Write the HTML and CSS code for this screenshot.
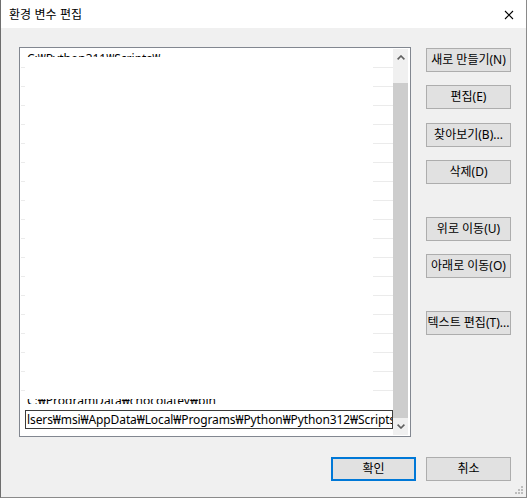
FILE: index.html
```html
<!DOCTYPE html>
<html lang="ko">
<head>
<meta charset="utf-8">
<title>환경 변수 편집</title>
<link rel="stylesheet" href="styles.css">
</head>
<body>
<div class="window">
  <div class="titlebar">
    <span class="title">환경 변수 편집</span>
    <span class="close">
      <svg width="10" height="10" viewBox="0 0 10 10"><path d="M1 1 L9 9 M9 1 L1 9" stroke="#000" stroke-width="1.1" fill="none"/></svg>
    </span>
  </div>
  <div class="main">
    <div class="list">
      <div class="rows">
        <div class="row"><div class="clip clip-first"><span class="cliptext">C:₩Python311₩Scripts₩</span></div></div>
        <div class="row"></div>
        <div class="row"></div>
        <div class="row"></div>
        <div class="row"></div>
        <div class="row"></div>
        <div class="row"></div>
        <div class="row"></div>
        <div class="row"></div>
        <div class="row"></div>
        <div class="row"></div>
        <div class="row"></div>
        <div class="row"></div>
        <div class="row"></div>
        <div class="row"></div>
        <div class="row"></div>
        <div class="row"></div>
        <div class="row"></div>
        <div class="row plain"><div class="clip clip-choco"><span class="cliptext choco">C:₩ProgramData₩chocolatey₩bin</span></div></div>
        <div class="row plain edit-row"><div class="edit">lsers₩msi₩AppData₩Local₩Programs₩Python₩Python312₩Scripts</div></div>
      </div>
      <div class="scrollbar">
        <div class="sb-btn">
          <svg width="8" height="5" viewBox="0 0 8 5"><path d="M0.6 4.4 L4 1 L7.4 4.4" stroke="#606060" stroke-width="1.6" fill="none"/></svg>
        </div>
        <div class="sb-track"><div class="sb-thumb"></div></div>
        <div class="sb-btn">
          <svg width="8" height="5" viewBox="0 0 8 5"><path d="M0.6 0.6 L4 4 L7.4 0.6" stroke="#606060" stroke-width="1.6" fill="none"/></svg>
        </div>
      </div>
    </div>
    <div class="buttons">
      <div class="btn">새로 만들기(N)</div>
      <div class="btn gap-a">편집(E)</div>
      <div class="btn gap-b">찾아보기(B)...</div>
      <div class="btn gap-a">삭제(D)</div>
      <div class="btn gap-l">위로 이동(U)</div>
      <div class="btn gap-a">아래로 이동(O)</div>
      <div class="btn gap-l">텍스트 편집(T)...</div>
    </div>
  </div>
  <div class="footer">
    <div class="btn btn-default">확인</div>
    <div class="btn">취소</div>
  </div>
  <div class="grip">
    <svg width="8" height="8" viewBox="0 0 8 8" fill="#bdbdbd">
      <rect x="6" y="0" width="2" height="2"/>
      <rect x="3" y="3" width="2" height="2"/><rect x="6" y="3" width="2" height="2"/>
      <rect x="0" y="6" width="2" height="2"/><rect x="3" y="6" width="2" height="2"/><rect x="6" y="6" width="2" height="2"/>
    </svg>
  </div>
</div>
</body>
</html>
```
FILE: styles.css
```css
html, body {
  margin: 0;
  padding: 0;
  background: #f0f0f0;
}
body {
  font-family: "Noto Sans", "Noto Sans CJK KR", sans-serif;
  font-size: 12px;
  color: #000;
}
.window {
  position: relative;
  width: 527px;
  height: 498px;
  box-sizing: border-box;
  border-left: 1px solid #6e6e6e;
  border-right: 1px solid #8a8a8a;
  border-bottom: 1px solid #8a8a8a;
  background: #f0f0f0;
  display: flex;
  flex-direction: column;
}
.titlebar {
  height: 28px;
  background: #fff;
  display: flex;
  align-items: center;
  justify-content: space-between;
  padding-left: 8px;
  padding-right: 12px;
}
.title {
  font-family: "Noto Sans CJK KR", sans-serif;
  font-size: 12px;
  line-height: 14px;
}
.close {
  display: flex;
  width: 10px;
  height: 10px;
  margin-top: 1px;
}
.main {
  display: flex;
  padding: 19px 15px 0 18px;
}
.list {
  width: 392px;
  height: 390px;
  box-sizing: border-box;
  border: 1px solid #828790;
  background: #fff;
  padding: 1px 2px 1px 0;
  display: flex;
}
.rows {
  flex: 1;
  min-width: 0;
  display: flex;
  flex-direction: column;
}
.row {
  height: 19px;
  flex: none;
  box-sizing: border-box;
  background-image: linear-gradient(#ebebeb, #ebebeb), linear-gradient(#ebebeb, #ebebeb);
  background-size: 4px 1px, 20px 1px;
  background-position: 1px 100%, 100% 100%;
  background-repeat: no-repeat;
}
.row.plain {
  background-image: none;
}
.clip {
  overflow: hidden;
  margin-left: 7px;
}
.clip-first {
  margin-top: 4px;
  height: 4px;
}
.clip-first .cliptext {
  margin-top: -4px;
}
.clip-choco {
  margin-top: 8px;
  height: 5px;
}
.clip-choco .cliptext {
  margin-top: -8px;
}
.cliptext {
  display: block;
  line-height: 19px;
  white-space: nowrap;
}
.edit-row {
  padding-left: 5px;
}
.edit {
  height: 19px;
  box-sizing: border-box;
  border: 1px solid #3c3c3c;
  padding-left: 1px;
  line-height: 17px;
  letter-spacing: -0.1px;
  white-space: nowrap;
  overflow: hidden;
}
.scrollbar {
  width: 15px;
  flex: none;
  background: #f0f0f0;
  display: flex;
  flex-direction: column;
}
.sb-btn {
  height: 17px;
  display: flex;
  align-items: center;
  justify-content: center;
}
.sb-track {
  flex: 1;
  padding-top: 17px;
  display: flex;
  flex-direction: column;
}
.sb-thumb {
  flex: 1;
  background: #cdcdcd;
}
.buttons {
  width: 85px;
  margin-left: 15px;
  margin-top: 1px;
  display: flex;
  flex-direction: column;
}
.btn {
  height: 24px;
  width: 85px;
  box-sizing: border-box;
  border: 1px solid #adadad;
  background: #e1e1e1;
  display: flex;
  align-items: center;
  justify-content: center;
  white-space: nowrap;
  line-height: 14px;
}
.gap-a { margin-top: 13px; }
.gap-b { margin-top: 14px; }
.gap-l { margin-top: 33px; }
.footer {
  display: flex;
  justify-content: flex-end;
  gap: 10px;
  padding-right: 15px;
  margin-top: 20px;
}
.btn-default {
  border: 2px solid #0078d7;
}
.grip {
  position: absolute;
  right: 3px;
  bottom: 3px;
  width: 8px;
  height: 8px;
  display: flex;
}
```
